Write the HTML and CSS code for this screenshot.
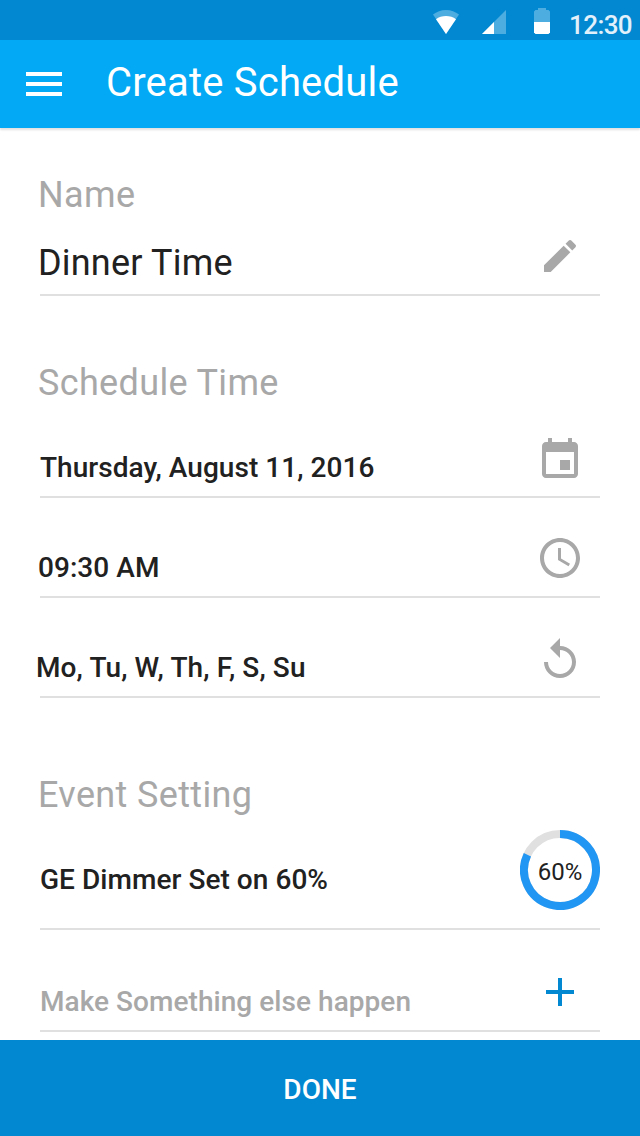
FILE: index.html
```html
<!DOCTYPE html>
<html lang="en">
<head>
    <meta charset="UTF-8">
    <meta name="viewport" content="width=device-width, initial-scale=1.0">
    <title>Create Schedule</title>
    <link rel="stylesheet" href="styles.css">
</head>
<body>
    <div class="statusbar">
        <svg class="wifi" width="26" height="24" viewBox="0 0 26 24">
            <path fill="#4eade0" d="M13 24L0 4.6C3.6 1.7 8 0 13 0s9.4 1.7 13 4.6z"/>
            <path fill="#fff" d="M13 24L3 9.2C5.8 7 9.200 6 13 6s7.200 1 10 3.200z"/>
        </svg>
        <svg class="signal" width="24" height="24" viewBox="0 0 24 24">
            <path fill="#4eade0" d="M0 24L24 0v24z"/>
            <path fill="#fff" d="M0 24l12-12v12z"/>
        </svg>
        <svg class="battery" width="16" height="26" viewBox="0 0 16 26">
            <path fill="#4eade0" d="M4 0h8v2h2.500L16 3.500V14H0V3.500L1.500 2H4z"/>
            <path fill="#fff" d="M0 14h16v10.500L14.500 26h-13L0 24.500z"/>
        </svg>
        <span class="clock">12:30</span>
    </div>

    <header class="navbar">
        <svg class="menu" width="36" height="24" viewBox="0 0 36 24">
            <path fill="#fff" d="M0 0h36v4H0zM0 10h36v4H0zM0 20h36v4H0z"/>
        </svg>
        <h1>Create Schedule</h1>
    </header>

    <main class="container">
        <section class="group">
            <h2>Name</h2>
            <div class="row name">
                <span>Dinner Time</span>
                <svg class="edit" width="32" height="32" viewBox="3 3 18 18">
                    <path d="M3 17.250V21h3.750L17.810 9.940l-3.750-3.750L3 17.250zM20.710 7.040c.390-.390.390-1.020 0-1.410l-2.340-2.340c-.390-.390-1.020-.390-1.410 0l-1.830 1.830 3.750 3.750 1.830-1.830z"/>
                </svg>
            </div>
        </section>

        <section class="group">
            <h2>Schedule Time</h2>
            <div class="row date">
                <span>Thursday, August 11, 2016</span>
                <svg class="icon" viewBox="0 0 24 24">
                    <path d="M17 12h-5v5h5v-5zM16 1v2H8V1H6v2H5c-1.110 0-1.990.9-1.990 2L3 19c0 1.100.890 2 2 2h14c1.100 0 2-.9 2-2V5c0-1.100-.9-2-2-2h-1V1h-2zm3 18H5V8h14v11z"/>
                </svg>
            </div>
            <div class="row time">
                <span>09:30 AM</span>
                <svg class="icon" viewBox="0 0 24 24">
                    <path d="M11.990 2C6.470 2 2 6.480 2 12s4.470 10 9.990 10C17.520 22 22 17.520 22 12S17.520 2 11.990 2zM12 20c-4.420 0-8-3.580-8-8s3.580-8 8-8 8 3.580 8 8-3.580 8-8 8zM12.500 7H11v6l5.250 3.150.750-1.230-4.500-2.670V7z"/>
                </svg>
            </div>
            <div class="row days">
                <span>Mo, Tu, W, Th, F, S, Su</span>
                <svg class="icon" viewBox="0 0 24 24">
                    <path d="M12 5V1L7 6l5 5V7c3.310 0 6 2.690 6 6s-2.690 6-6 6-6-2.690-6-6H4c0 4.420 3.580 8 8 8s8-3.580 8-8-3.580-8-8-8z"/>
                </svg>
            </div>
        </section>

        <section class="group">
            <h2>Event Setting</h2>
            <div class="row event">
                <span>GE Dimmer Set on 60%</span>
                <svg class="dial" width="80" height="80" viewBox="0 0 80 80">
                    <circle cx="40" cy="40" r="36" fill="none" stroke="#e0e0e0" stroke-width="8"/>
                    <path d="M40 4A36 36 0 1 1 7.400 24.700" fill="none" stroke="#2196f3" stroke-width="8"/>
                    <text x="40" y="50" text-anchor="middle">60%</text>
                </svg>
            </div>
            <div class="row add">
                <span>Make Something else happen</span>
                <svg class="icon" viewBox="0 0 24 24">
                    <path d="M19 13h-6v6h-2v-6H5v-2h6V5h2v6h6v2z"/>
                </svg>
            </div>
        </section>
    </main>

    <button class="done">DONE</button>
</body>
</html>
```
FILE: styles.css
```css
* {
    box-sizing: border-box;
}

body {
    font-family: Roboto, sans-serif;
    margin: 0;
    min-height: 1136px;
    display: flex;
    flex-direction: column;
    background-color: #fff;
    color: #212121;
}

.statusbar {
    height: 40px;
    display: flex;
    align-items: flex-end;
    padding: 0 8px 6px 0;
    justify-content: flex-end;
    background-color: #0288d1;
}

.signal {
    margin-left: 23px;
}

.battery {
    margin-left: 28px;
}

.clock {
    margin-left: 19px;
    font-size: 26px;
    font-weight: 500;
    line-height: 18px;
    letter-spacing: -0.6px;
    color: #e1f0fa;
}

.navbar {
    height: 88px;
    display: flex;
    align-items: center;
    padding: 0 26px;
    background-color: #03a9f4;
    box-shadow: 0 2px 2px rgba(0, 0, 0, 0.12);
}

.navbar h1 {
    margin: 0 0 2px 44px;
    font-size: 40px;
    font-weight: 400;
    line-height: 48px;
    letter-spacing: 0.2px;
    color: #fff;
}

.container {
    flex: 1;
    padding: 45px 40px 0;
}

.group + .group {
    margin-top: 65px;
}

.group:last-child {
    margin-top: 75px;
}

h2 {
    margin: 0 0 0 -2px;
    font-size: 36px;
    font-weight: 400;
    line-height: 44px;
    letter-spacing: 0.35px;
    color: #a8a8a8;
}

.row {
    height: 100px;
    display: flex;
    align-items: flex-end;
    justify-content: space-between;
    border-bottom: 2px solid #e0e0e0;
    font-size: 28px;
    font-weight: 500;
    line-height: 36px;
    letter-spacing: 0.05px;
}

.row span {
    margin-bottom: 10px;
}

.row svg {
    fill: #a8a8a8;
}

.icon {
    width: 48px;
    height: 48px;
    margin: 0 16px 12px 0;
}

.name {
    height: 79px;
    font-size: 36px;
    font-weight: 400;
    line-height: 44px;
    letter-spacing: 0.2px;
}

.name span {
    margin: 0 0 9px -2px;
}

.edit {
    margin: 0 24px 22px 0;
}

.date {
    height: 93px;
}

.time span {
    margin-left: -2px;
}

.time .icon {
    margin-bottom: 14px;
}

.days {
    letter-spacing: 0.12px;
}

.days span {
    margin-left: -4px;
}

.event {
    height: 113px;
}

.event span {
    margin-bottom: 30px;
}

.dial {
    margin-bottom: 18px;
}

.row .dial text {
    font-size: 24px;
    font-weight: 400;
    letter-spacing: 0;
    fill: #212121;
}

.add {
    height: 102px;
    color: #a8a8a8;
}

.add .icon {
    margin-bottom: 14px;
    fill: #0288d1;
}

.done {
    height: 96px;
    padding: 2px 0 0;
    border: none;
    background-color: #0288d1;
    font-family: inherit;
    font-size: 28px;
    font-weight: 500;
    color: #fff;
}
```
